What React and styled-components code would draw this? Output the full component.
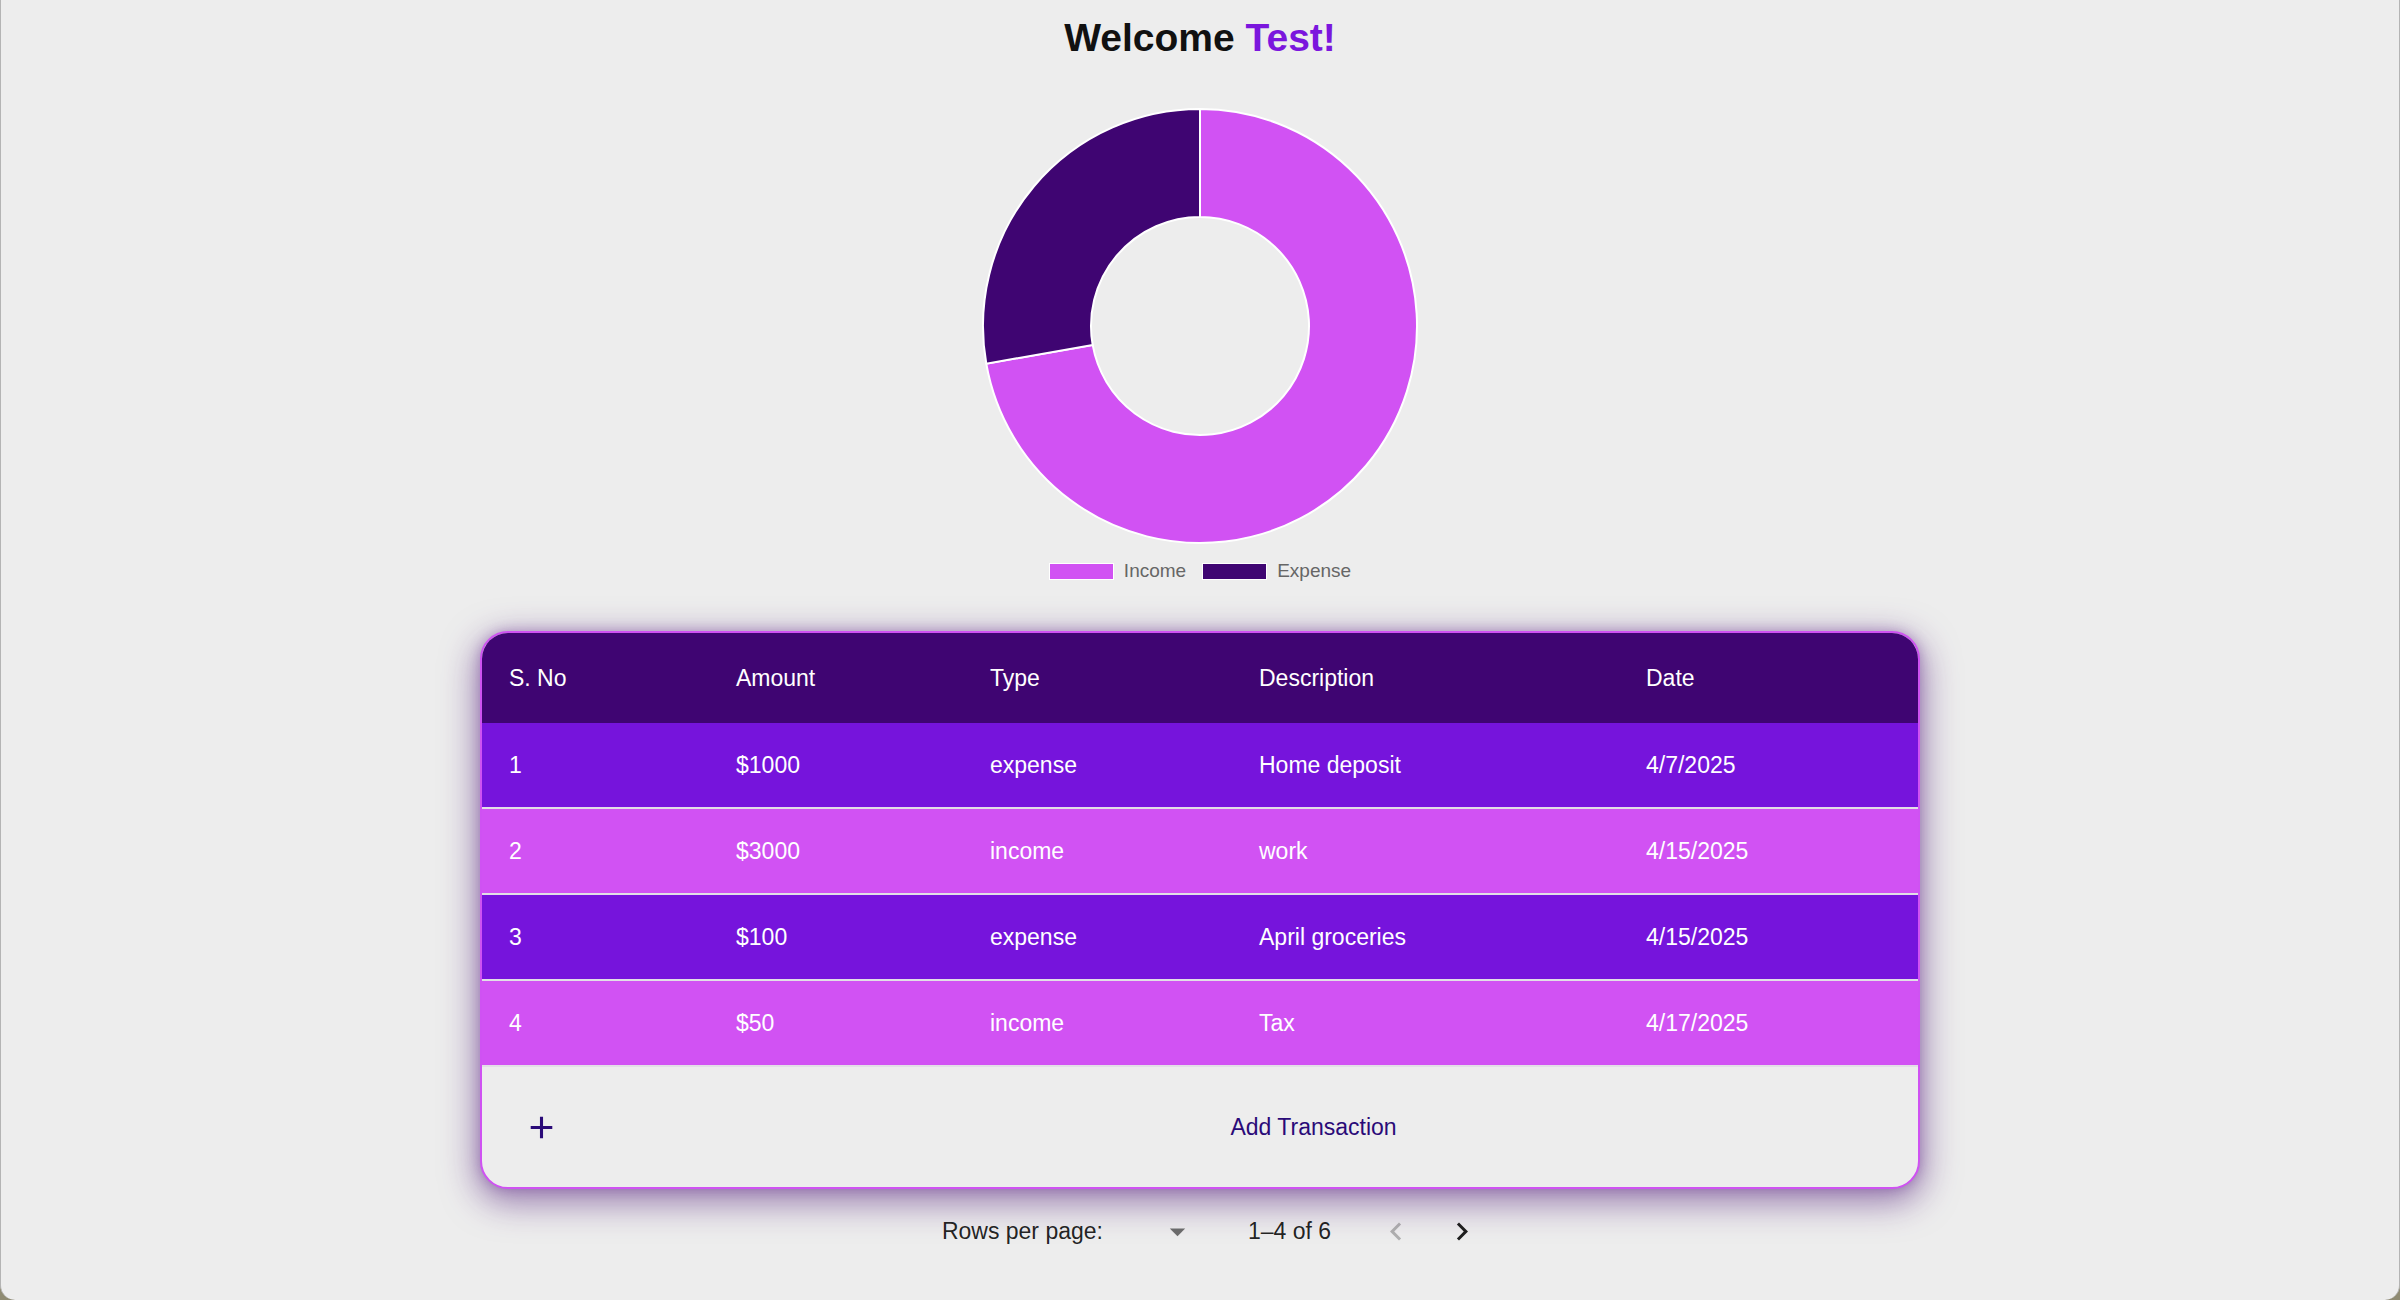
import React from 'react'
import styled, { createGlobalStyle } from 'styled-components'

const GlobalStyle = createGlobalStyle`
  html, body {
    margin: 0;
    padding: 0;
    background: #8f8b72;
  }
  * {
    box-sizing: border-box;
  }
`

const COLORS = {
  page: '#ededed',
  header: '#3f0572',
  expense: '#7614dc',
  income: '#d152f3',
  ink: '#2a0a78',
}

const chartData = [
  { label: 'Income', value: 3250, color: COLORS.income },
  { label: 'Expense', value: 1250, color: COLORS.header },
]

const transactions = [
  { id: 1, amount: 1000, type: 'expense', description: 'Home deposit', date: '4/7/2025' },
  { id: 2, amount: 3000, type: 'income', description: 'work', date: '4/15/2025' },
  { id: 3, amount: 100, type: 'expense', description: 'April groceries', date: '4/15/2025' },
  { id: 4, amount: 50, type: 'income', description: 'Tax', date: '4/17/2025' },
]

const Page = styled.div`
  min-height: 1300px;
  background: ${COLORS.page};
  border-left: 1px solid #b4b4b4;
  border-right: 1px solid #b4b4b4;
  border-radius: 0 0 15px 15px;
  display: flex;
  flex-direction: column;
  align-items: center;
  font-family: "Liberation Sans", Arial, sans-serif;
`

const Title = styled.h1`
  margin: 15px 0 0;
  font-size: 39px;
  line-height: 46px;
  font-weight: bold;
  color: #111;

  span {
    color: #7b16dd;
  }
`

const ChartBox = styled.div`
  margin-top: 46px;
  display: flex;
  flex-direction: column;
  align-items: center;
`

const Legend = styled.div`
  margin-top: 15px;
  display: flex;
  align-items: center;
  gap: 16px;
`

const LegendItem = styled.div`
  display: flex;
  align-items: center;
  gap: 10px;
  font-size: 19px;
  line-height: 22px;
  color: #666;
`

const Swatch = styled.span`
  width: 65px;
  height: 17px;
  background: ${p => p.$color};
  border: 1px solid #fff;
  outline: 1px solid ${p => p.$color};
  outline-offset: -2px;
`

const TableCard = styled.div`
  margin-top: 49px;
  width: 1440px;
  border: 2px solid #cf52f2;
  border-radius: 28px;
  overflow: hidden;
  box-shadow: 0 10px 34px 4px rgba(85, 35, 125, 0.55), 0 0 12px rgba(120, 60, 160, 0.35);
  background: ${COLORS.page};
`

const Row = styled.div`
  display: grid;
  grid-template-columns: 227px 254px 269px 387px 1fr;
  align-items: center;
  height: ${p => (p.$head ? '90px' : '86px')};
  background: ${p => p.$bg};
  border-bottom: ${p => (p.$head ? 'none' : '2px solid #e2dfe6')};
  color: #fff;
  font-size: 23px;
`

const Cell = styled.div`
  padding-left: 27px;
  white-space: nowrap;
`

const FooterRow = styled.div`
  display: grid;
  grid-template-columns: 227px 1fr;
  align-items: center;
  height: 120px;
`

const AddIcon = styled.div`
  padding-left: 41px;
  display: flex;
  align-items: center;
  color: ${COLORS.ink};
`

const AddLabel = styled.div`
  text-align: center;
  font-size: 23px;
  color: ${COLORS.ink};
`

const Pagination = styled.div`
  height: 84px;
  display: flex;
  align-items: center;
  justify-content: center;
  padding-left: 22px;
  font-size: 23px;
  color: rgba(0, 0, 0, 0.87);
`

const SelectBox = styled.div`
  margin-left: 12px;
  margin-right: 52px;
  width: 81px;
  display: flex;
  justify-content: flex-end;
  color: rgba(0, 0, 0, 0.54);
`

const Actions = styled.div`
  margin-left: 47px;
  display: flex;
  gap: 30px;
`

const NavButton = styled.div`
  width: 36px;
  height: 36px;
  display: flex;
  align-items: center;
  justify-content: center;
  color: ${p => (p.$disabled ? 'rgba(0,0,0,0.26)' : 'rgba(0,0,0,0.87)')};
`

const Icon = ({ d, size = 37 }) => (
  <svg width={size} height={size} viewBox="0 0 24 24" fill="currentColor">
    <path d={d} />
  </svg>
)

const Donut = ({ data, outer = 217, inner = 109 }) => {
  const size = outer * 2 + 4
  const c = size / 2
  const total = data.reduce((s, d) => s + d.value, 0)
  const pt = (r, a) => [c + r * Math.cos(a), c + r * Math.sin(a)]
  let start = -Math.PI / 2
  return (
    <svg width={size} height={size}>
      {data.map(d => {
        const sweep = (d.value / total) * Math.PI * 2
        const end = start + sweep
        const large = sweep > Math.PI ? 1 : 0
        const [x1, y1] = pt(outer, start)
        const [x2, y2] = pt(outer, end)
        const [x3, y3] = pt(inner, end)
        const [x4, y4] = pt(inner, start)
        const path = `M${x1} ${y1} A${outer} ${outer} 0 ${large} 1 ${x2} ${y2} L${x3} ${y3} A${inner} ${inner} 0 ${large} 0 ${x4} ${y4} Z`
        start = end
        return <path key={d.label} d={path} fill={d.color} stroke="#fff" strokeWidth="2" />
      })}
    </svg>
  )
}

const App = () => {
  return (
    <Page>
      <GlobalStyle />
      <Title>
        Welcome <span>Test!</span>
      </Title>

      <ChartBox>
        <Donut data={chartData} />
        <Legend>
          {chartData.map(d => (
            <LegendItem key={d.label}>
              <Swatch $color={d.color} />
              {d.label}
            </LegendItem>
          ))}
        </Legend>
      </ChartBox>

      <TableCard>
        <Row $head $bg={COLORS.header}>
          <Cell>S. No</Cell>
          <Cell>Amount</Cell>
          <Cell>Type</Cell>
          <Cell>Description</Cell>
          <Cell>Date</Cell>
        </Row>
        {transactions.map((t, i) => (
          <Row key={t.id} $bg={t.type === 'expense' ? COLORS.expense : COLORS.income}>
            <Cell>{i + 1}</Cell>
            <Cell>${t.amount}</Cell>
            <Cell>{t.type}</Cell>
            <Cell>{t.description}</Cell>
            <Cell>{t.date}</Cell>
          </Row>
        ))}
        <FooterRow>
          <AddIcon>
            <Icon d="M19 13h-6v6h-2v-6H5v-2h6V5h2v6h6z" />
          </AddIcon>
          <AddLabel>Add Transaction</AddLabel>
        </FooterRow>
      </TableCard>

      <Pagination>
        <span>Rows per page:</span>
        <SelectBox>
          <Icon d="M7 10l5 5 5-5z" />
        </SelectBox>
        <span>1–4 of 6</span>
        <Actions>
          <NavButton $disabled>
            <Icon d="M15.41 7.41 14 6l-6 6 6 6 1.41-1.41L10.83 12z" />
          </NavButton>
          <NavButton>
            <Icon d="M10 6 8.59 7.41 13.17 12l-4.58 4.59L10 18l6-6z" />
          </NavButton>
        </Actions>
      </Pagination>
    </Page>
  )
}

export default App
